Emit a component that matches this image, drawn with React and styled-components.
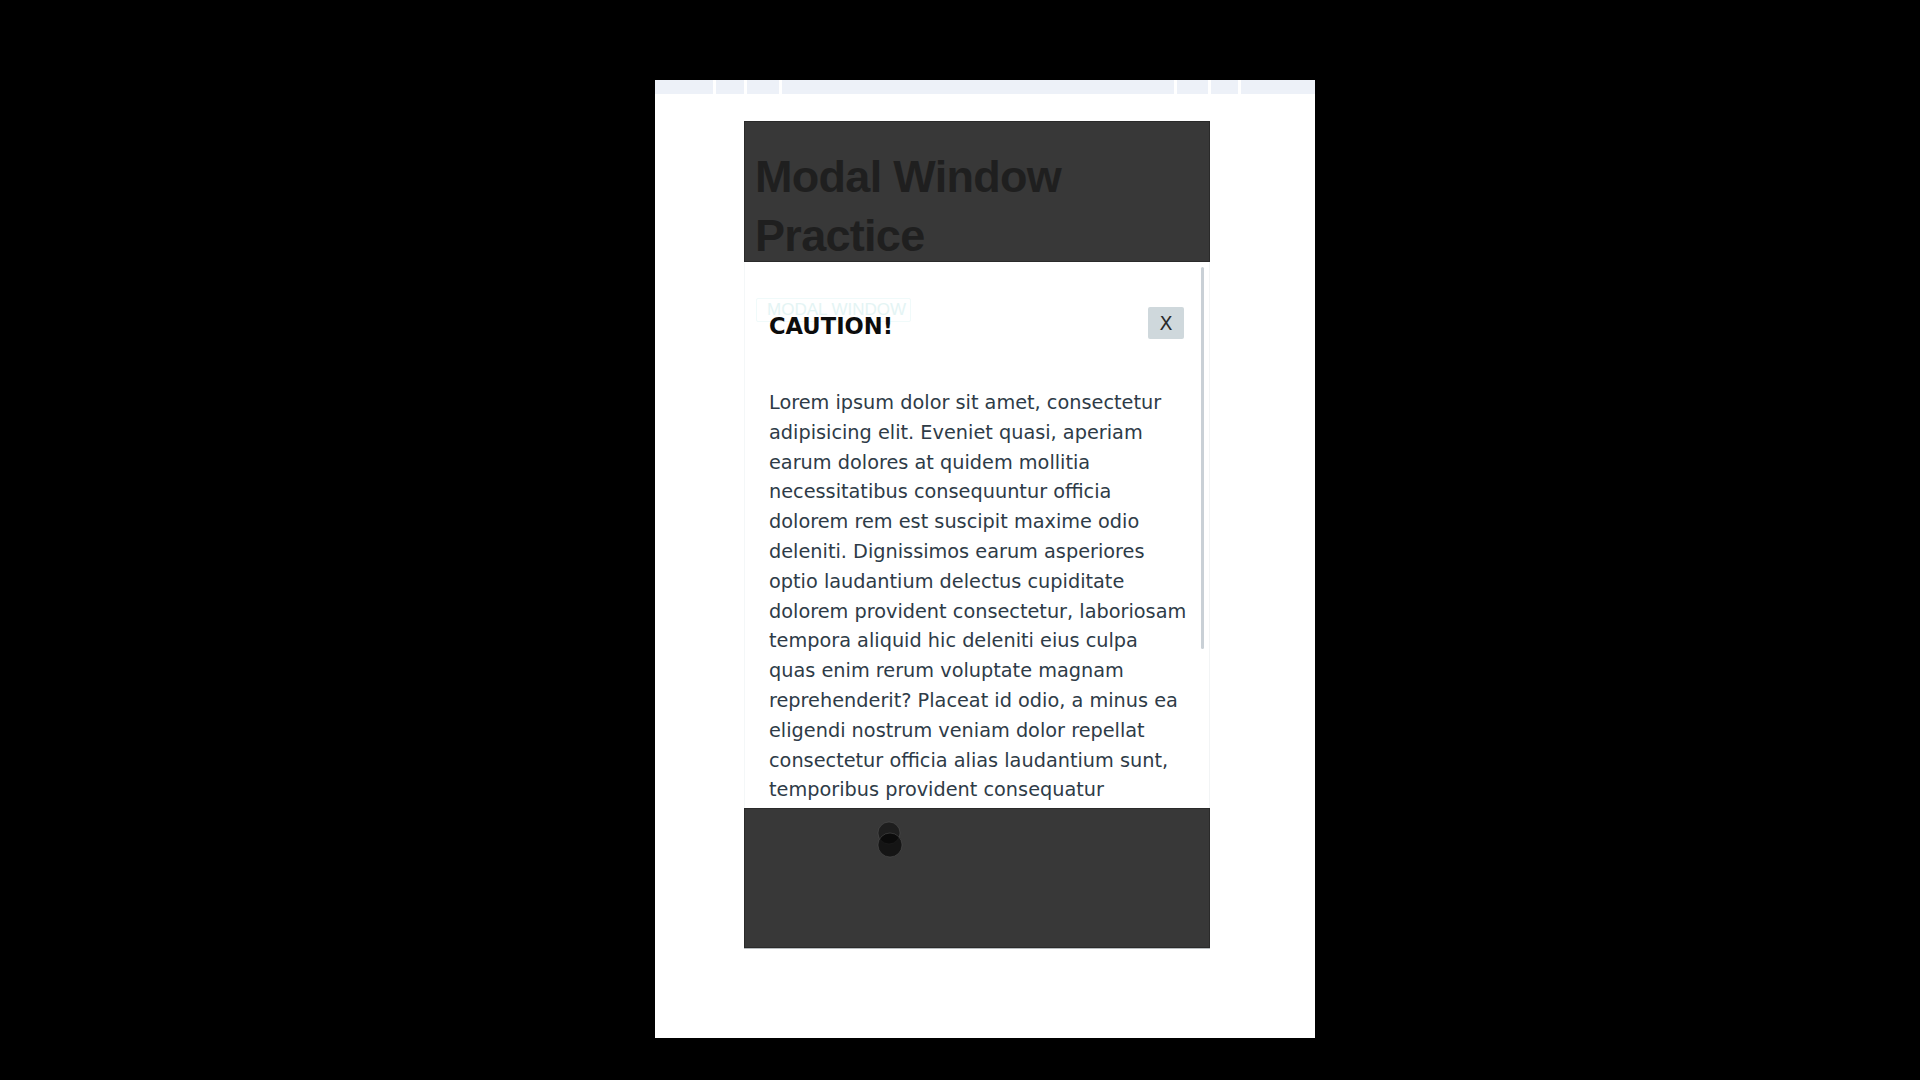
import React from 'react'
import styled, { createGlobalStyle } from 'styled-components'

const Global = createGlobalStyle`
  html, body {
    margin: 0;
    padding: 0;
    background: #000;
  }
  * {
    box-sizing: border-box;
  }
`

const Stage = styled.div`
  width: 1920px;
  height: 1080px;
  background: #000;
  padding: 80px 0 0 655px;
`

const Page = styled.div`
  width: 660px;
  height: 958px;
  background: #fff;
  display: flex;
  flex-direction: column;
`

const TabStrip = styled.div`
  display: flex;
  gap: 3px;
  height: 14px;
`

const Tab = styled.div`
  flex: 0 0 ${(p) => p.w}px;
  background: #edf1f8;
`

const Frame = styled.div`
  width: 466px;
  margin: 27px 0 0 89px;
  display: flex;
  flex-direction: column;
`

const DarkBox = styled.div`
  height: ${(p) => p.h}px;
  background: #383838;
  border: 1px solid #2a2a2a;
  box-shadow: 0 1px 0 #b8bcbf;
`

const Header = styled(DarkBox)`
  padding: 25px 0 0 10px;
  overflow: hidden;
`

const Title = styled.h1`
  margin: 0;
  font-family: "Liberation Sans", Arial, sans-serif;
  font-weight: 700;
  font-size: 45px;
  line-height: 59px;
  letter-spacing: -0.7px;
  color: #1f1f1f;
`

const Modal = styled.div`
  position: relative;
  height: 546px;
  overflow: hidden;
  background: #fff;
  border-left: 1px solid #f4f7f8;
  border-right: 1px solid #f2f4f5;
  padding: 45px 20px 0 24px;
`

const GhostButton = styled.div`
  position: absolute;
  left: 11px;
  top: 36px;
  width: 155px;
  height: 24px;
  border: 1px solid #f0fafa;
  border-radius: 2px;
  font-family: "Liberation Sans", Arial, sans-serif;
  font-size: 17px;
  line-height: 22px;
  padding-left: 10px;
  color: #e4f4f4;
`

const Scrollbar = styled.div`
  position: absolute;
  right: 5px;
  top: 5px;
  width: 3px;
  height: 382px;
  border-radius: 2px;
  background: #c9d0d6;
`

const TitleRow = styled.div`
  position: relative;
  display: flex;
  justify-content: space-between;
  align-items: flex-start;
  padding-right: 5px;
`

const Caution = styled.h2`
  margin: 5px 0 0;
  font-family: "DejaVu Sans", Verdana, sans-serif;
  font-weight: 700;
  font-size: 22.6px;
  line-height: 28px;
  color: #0c0c0c;
`

const CloseButton = styled.button`
  width: 36px;
  height: 32px;
  border: none;
  border-radius: 2px;
  background: #cfd8dc;
  color: #2a2a2a;
  font-family: "DejaVu Sans", Verdana, sans-serif;
  font-size: 19px;
  padding: 0;
  cursor: pointer;
`

const Text = styled.p`
  margin: 48px 0 0;
  font-family: "DejaVu Sans", Verdana, sans-serif;
  font-size: 19.3px;
  line-height: 29.8px;
  color: #2e3b47;
`

const Footer = styled(DarkBox)`
  padding: 12px 0 0 131px;
`

const Cursor = () => (
  <svg width="30" height="40" viewBox="0 0 30 40">
    <circle cx="13" cy="12" r="11" fill="rgba(0,0,0,0.45)" stroke="rgba(90,90,90,0.6)" strokeWidth="0.8" />
    <circle cx="14" cy="24" r="12" fill="rgba(0,0,0,0.62)" stroke="rgba(90,90,90,0.6)" strokeWidth="0.8" />
  </svg>
)

const tabs = [58, 28, 32, 392, 31, 27, 74]

const lorem =
  'Lorem ipsum dolor sit amet, consectetur adipisicing elit. Eveniet quasi, aperiam earum dolores at quidem mollitia necessitatibus consequuntur officia dolorem rem est suscipit maxime odio deleniti. Dignissimos earum asperiores optio laudantium delectus cupiditate dolorem provident consectetur, laboriosam tempora aliquid hic deleniti eius culpa quas enim rerum voluptate magnam reprehenderit? Placeat id odio, a minus ea eligendi nostrum veniam dolor repellat consectetur officia alias laudantium sunt, temporibus provident consequatur ducimus quibusdam voluptates, nihil iure rerum.'

const App = () => {
  return (
    <Stage>
      <Global />
      <Page>
        <TabStrip>
          {tabs.map((w, i) => (
            <Tab key={i} w={w} />
          ))}
        </TabStrip>
        <Frame>
          <Header h={141}>
            <Title>
              Modal Window
              <br />
              Practice
            </Title>
          </Header>
          <Modal>
            <GhostButton>MODAL WINDOW</GhostButton>
            <Scrollbar />
            <TitleRow>
              <Caution>CAUTION!</Caution>
              <CloseButton>X</CloseButton>
            </TitleRow>
            <Text>{lorem}</Text>
          </Modal>
          <Footer h={140}>
            <Cursor />
          </Footer>
        </Frame>
      </Page>
    </Stage>
  )
}

export default App
